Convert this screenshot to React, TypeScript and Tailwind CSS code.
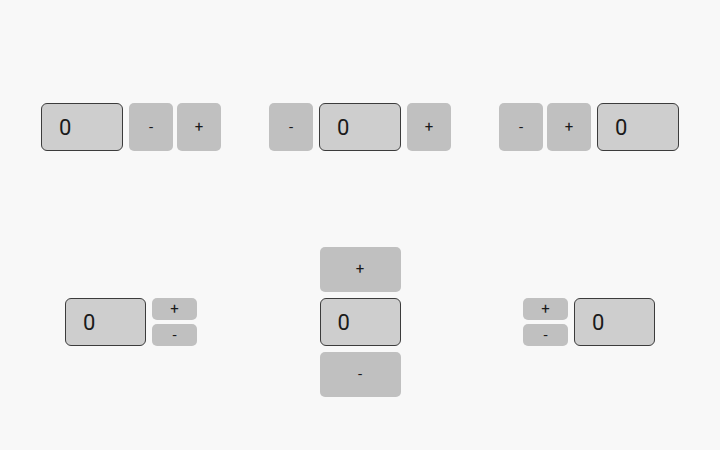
// Spinner layouts: value box with +/- buttons in six arrangements

function ValueBox({ w = 'w-[82px]' }: { w?: string }) {
  return (
    <div
      className={`${w} h-[48px] flex items-center pl-[17px] bg-[#cecece] border border-[#3c3c3c] rounded-[6px] text-[22px] text-[#1a1a1a]`}
    >
      0
    </div>
  );
}

function Btn({ label, cls }: { label: string; cls: string }) {
  return (
    <button
      className={`${cls} flex items-center justify-center bg-[#c0c0c0] rounded-[5px] text-[15px] text-[#1a1a1a]`}
    >
      {label}
    </button>
  );
}

export default function App() {
  const big = 'w-[44px] h-[48px]';
  const small = 'w-[45px] h-[22px]';

  return (
    <div
      className="w-[720px] h-[450px] bg-[#f8f8f8] flex flex-col pt-[103px]"
      style={{ fontFamily: 'Roboto, "Noto Sans", sans-serif' }}
    >
      {/* Baris atas: horizontal */}
      <div className="grid grid-cols-[262px_196px_262px] items-center">
        <div className="flex justify-center items-center">
          <ValueBox />
          <div className="flex gap-[4px] ml-[6px]">
            <Btn label="-" cls={big} />
            <Btn label="+" cls={big} />
          </div>
        </div>
        <div className="flex justify-center items-center gap-[6px]">
          <Btn label="-" cls={big} />
          <ValueBox />
          <Btn label="+" cls={big} />
        </div>
        <div className="flex justify-center items-center">
          <div className="flex gap-[4px] mr-[6px]">
            <Btn label="-" cls={big} />
            <Btn label="+" cls={big} />
          </div>
          <ValueBox />
        </div>
      </div>

      {/* Baris bawah: vertikal */}
      <div className="mt-[96px] grid grid-cols-[262px_196px_262px] items-center">
        <div className="flex justify-center items-center gap-[6px]">
          <ValueBox w="w-[81px]" />
          <div className="flex flex-col gap-[4px]">
            <Btn label="+" cls={small} />
            <Btn label="-" cls={small} />
          </div>
        </div>
        <div className="flex flex-col items-center gap-[6px]">
          <Btn label="+" cls="w-[81px] h-[45px]" />
          <ValueBox w="w-[81px]" />
          <Btn label="-" cls="w-[81px] h-[45px]" />
        </div>
        <div className="flex justify-center items-center gap-[6px]">
          <div className="flex flex-col gap-[4px]">
            <Btn label="+" cls={small} />
            <Btn label="-" cls={small} />
          </div>
          <ValueBox w="w-[81px]" />
        </div>
      </div>
    </div>
  );
}
